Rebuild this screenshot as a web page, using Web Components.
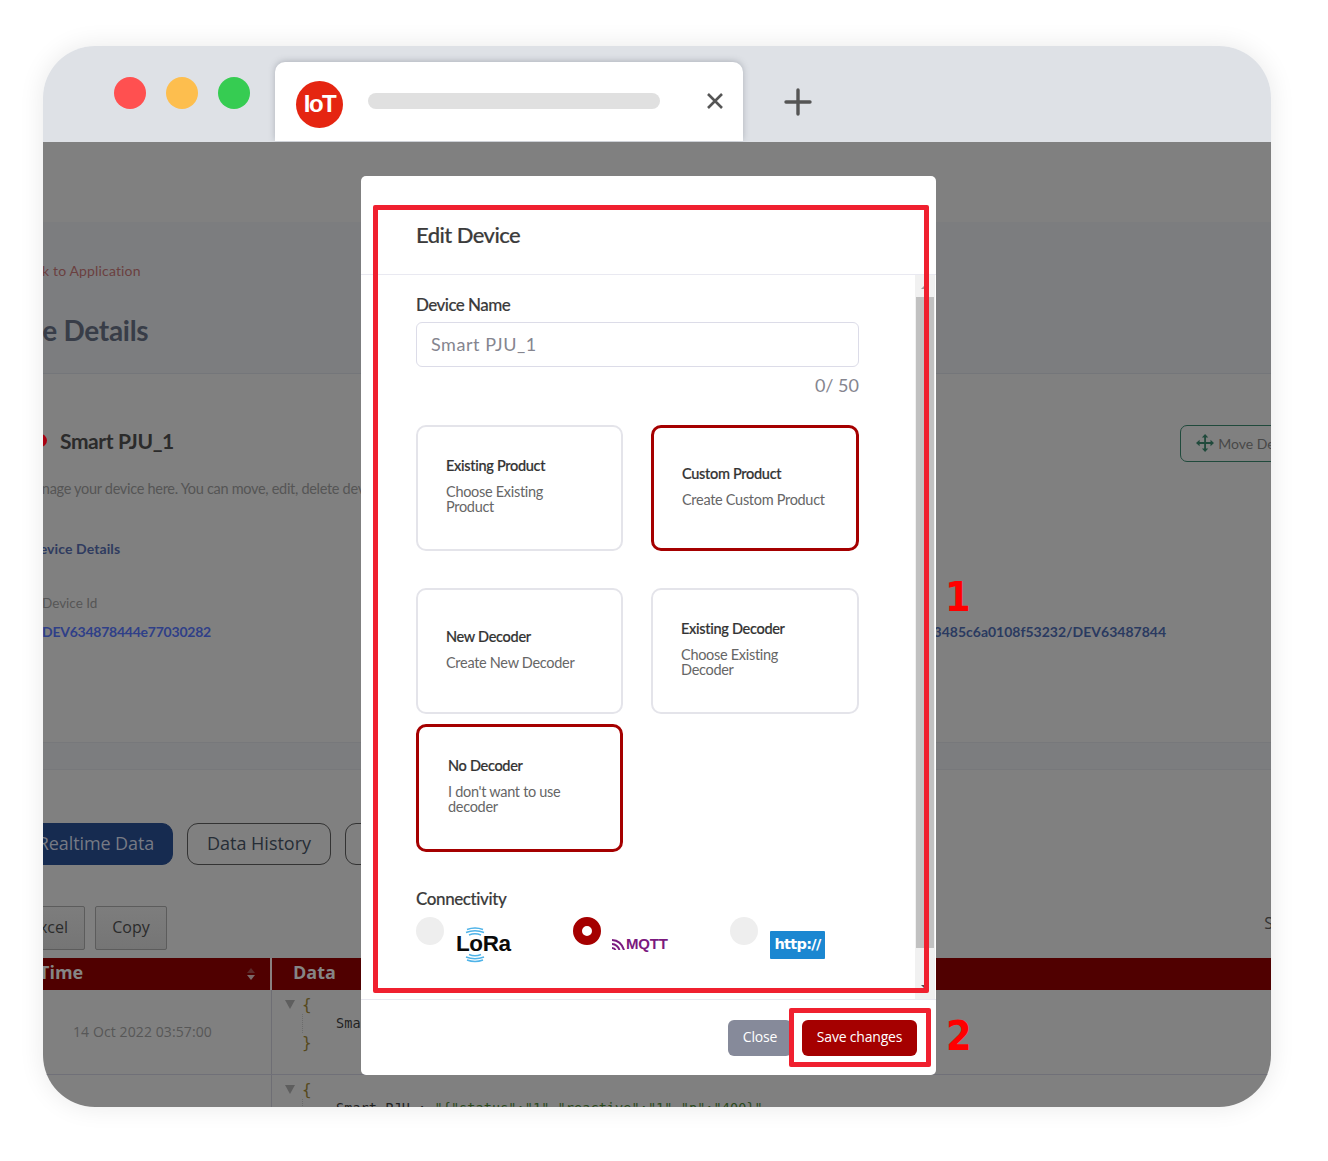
<!DOCTYPE html>
<html>
<head>
<meta charset="utf-8">
<title>Edit Device</title>
<style>
  html, body { background: #fff; }
  body { margin: 0; padding: 46px 0 54px 43px; font-family: Lato, sans-serif; }
</style>
</head>
<body>
<browser-window>
  <device-page></device-page>
  <edit-modal></edit-modal>
  <mark-box slot="marks" style="left:330px;top:159px;width:556px;height:788px"></mark-box>
  <mark-box slot="marks" style="left:746px;top:962px;width:142px;height:59px"></mark-box>
  <mark-digit slot="marks" style="left:902px;top:526px">1</mark-digit>
  <mark-digit slot="marks" style="left:903px;top:965px">2</mark-digit>
</browser-window>

<script>
class BrowserWindow extends HTMLElement {
  constructor() {
    super();
    this.attachShadow({ mode: "open" });
  }

  connectedCallback() {
    this.shadowRoot.innerHTML = `
      <style>
        :host {
          display: block;
          position: relative;
          width: 1228px;
          height: 1061px;
          border-radius: 52px;
          overflow: hidden;
          box-shadow: 0 0 26px rgba(0, 0, 0, 0.09);
        }
        .bar {
          display: flex;
          height: 96px;
          background: #dee1e6;
          box-sizing: border-box;
          padding: 16px 0 0 71px;
        }
        .dots { display: flex; gap: 20px; padding-top: 15px; width: 161px; }
        .dot { width: 32px; height: 32px; border-radius: 50%; }
        .tab {
          width: 468px;
          height: 79px;
          background: #fff;
          border-radius: 10px 10px 0 0;
          box-shadow: 0 -1px 6px rgba(90, 95, 110, 0.35);
          display: flex;
          align-items: center;
          box-sizing: border-box;
          padding-left: 21px;
          position: relative;
        }
        .logo {
          width: 47px;
          height: 47px;
          border-radius: 50%;
          background: #e52511;
          color: #fff;
          font: 700 24px/45px "Liberation Sans", sans-serif;
          letter-spacing: -1.5px;
          text-align: center;
          margin-top: 5px;
        }
        .pill { width: 292px; height: 16px; border-radius: 8px; background: #e0e0e0; margin: 0 0 2px 25px; }
        .close { margin: 0 0 2px 46px; }
        .plus { margin: 26px 0 0 41px; }
        .page { position: relative; height: 965px; overflow: hidden; }
      </style>
      <div class="bar">
        <div class="dots">
          <div class="dot" style="background:#ff5050"></div>
          <div class="dot" style="background:#fdbe4e"></div>
          <div class="dot" style="background:#36cc52"></div>
        </div>
        <div class="tab">
          <div class="logo">IoT</div>
          <div class="pill"></div>
          <svg class="close" width="18" height="18" viewBox="0 0 18 18"><path d="M2 2 16 16M16 2 2 16" stroke="#555" stroke-width="2.6" fill="none"/></svg>
        </div>
        <svg class="plus" width="28" height="28" viewBox="0 0 28 28"><path d="M14 2V26M2 14H26" stroke="#555" stroke-width="3.4" fill="none" stroke-linecap="round"/></svg>
      </div>
      <div class="page"><slot></slot></div>
      <slot name="marks"></slot>
    `;
  }
}

class DevicePage extends HTMLElement {
  constructor() {
    super();
    this.attachShadow({ mode: "open" });
  }

  connectedCallback() {
    this.shadowRoot.innerHTML = `
      <style>
        :host {
          display: block;
          height: 965px;
          background: #808080;
          font-family: Lato, sans-serif;
          overflow: hidden;
          white-space: nowrap;
        }
        .top { height: 80px; }
        .head { height: 152px; box-sizing: border-box; background: #7c7d7f; border-bottom: 1px solid #74767a; padding-top: 40px; }
        .back { font-size: 14px; line-height: 18px; color: #6b4040; margin-left: -24px; letter-spacing: 0.15px; }
        .title { font-size: 28px; font-weight: 700; line-height: 36px; color: #383d48; margin: 32px 0 0 -70px; letter-spacing: -0.3px; }
        .info { height: 368px; box-sizing: border-box; padding-top: 49px; position: relative; }
        .name-row { display: flex; align-items: center; height: 34px; justify-content: space-between; }
        .name { display: flex; align-items: center; gap: 13px; font-size: 21px; font-weight: 700; color: #2b2b2b; letter-spacing: -0.4px; margin-left: -9px; }
        .status { width: 13px; height: 13px; border-radius: 50%; background: #a80010; }
        .move {
          display: flex;
          align-items: center;
          gap: 4px;
          width: 120px;
          height: 37px;
          box-sizing: border-box;
          border: 1px solid #204a3c;
          border-radius: 7px;
          padding-left: 15px;
          margin-right: -29px;
          font-size: 14px;
          color: #484848;
          position: relative;
          top: 3px;
        }
        .desc { font-size: 14.5px; color: #555; margin: 21px 0 0 -21px; line-height: 22px; letter-spacing: -0.3px; }
        .sub { font-size: 14px; font-weight: 700; color: #2f3b5f; margin: 40px 0 0 -14px; line-height: 18px; letter-spacing: 0.1px; }
        .fields { display: flex; justify-content: space-between; margin-top: 36px; }
        .label { font-size: 13.5px; color: #565656; line-height: 18px; margin-left: -1px; }
        .value { font-size: 14px; font-weight: 700; line-height: 20px; margin-top: 10px; color: #2f3f88; margin-left: -1px; letter-spacing: -0.24px; }
        .url { color: #2a3a60; margin: 28px 105px 0 0; font-size: 14px; line-height: 20px; font-weight: 700; }
        .strip { height: 28px; box-sizing: border-box; background: #7c7d7f; border-top: 1px solid #77787b; border-bottom: 1px solid #77787b; }
        .tabs { display: flex; gap: 14px; padding-top: 53px; height: 42px; }
        .pillbtn {
          height: 42px;
          box-sizing: border-box;
          border: 1px solid #333;
          border-radius: 11px;
          font: 18px/38px "Open Sans", sans-serif;
          color: #262d36;
          text-align: center;
        }
        .pillbtn.on { background: #162b50; border-color: #162b50; color: #767a84; width: 152px; margin-left: -22px; padding-right: 2px; letter-spacing: -0.1px; }
        .tools { display: flex; gap: 10px; margin-top: 41px; height: 44px; position: relative; }
        .tool {
          box-sizing: border-box;
          border: 1px solid #5c5c5c;
          border-radius: 2px;
          background: linear-gradient(#7d7d7d, #757575);
          font: 16px/41px "Open Sans", sans-serif;
          color: #2b2b2b;
          text-align: center;
        }
        .search { position: absolute; right: -44px; top: 5px; font: 16px/24px "Open Sans", sans-serif; color: #333; }
        .thead { display: flex; height: 32px; margin-top: 8px; background: #500000; color: #858585; font: 700 18px/29px "Open Sans", sans-serif; }
        .th1 { width: 229px; flex: none; box-sizing: border-box; border-right: 2px solid #8a8080; display: flex; justify-content: space-between; padding-right: 15px; }
        .th1 span:first-child { margin-left: -4px; }
        .th2 { padding-left: 21px; }
        .sort { display: flex; flex-direction: column; justify-content: center; gap: 2px; }
        .sort i { width: 0; height: 0; border-left: 4px solid transparent; border-right: 4px solid transparent; }
        .row { display: flex; height: 85px; box-sizing: border-box; border-bottom: 1px solid #707078; }
        .c1 { width: 229px; flex: none; box-sizing: border-box; border-right: 1px solid #6e6e74; font: 14px/84px "Open Sans", sans-serif; color: #575757; padding-left: 30px; letter-spacing: 0.1px; }
        .json { padding: 5px 0 0 13px; font: 13.5px/19px "DejaVu Sans Mono", monospace; color: #222; letter-spacing: 0.08px; }
        .open { display: flex; align-items: center; gap: 7px; }
        .open i { width: 0; height: 0; border-left: 5px solid transparent; border-right: 5px solid transparent; border-top: 9px solid #5e5e5e; }
        .brace { font-size: 16px; color: #56491c; }
        .inner { margin-left: 17px; border-left: 1px dotted #6c6c6c; padding-left: 33px; }
        .close { padding-left: 17px; }
        .green { color: #2a4a1c; }
      </style>
      <div class="top"></div>
      <div class="head">
        <div class="back">Back to Application</div>
        <div class="title">Device Details</div>
      </div>
      <div class="info">
        <div class="name-row">
          <div class="name"><span class="status"></span>Smart PJU_1</div>
          <div class="move">
            <svg width="20" height="20" viewBox="0 0 20 20" fill="#204a3c"><path d="M10 3V17M3 10H17" stroke="#204a3c" stroke-width="2"/><path d="M10 0 13.5 4H6.500ZM10 20 6.500 16H13.500ZM0 10 4 6.500V13.500ZM20 10 16 13.500V6.500Z"/></svg>
            <span>Move Device</span>
          </div>
        </div>
        <div class="desc">Manage your device here. You can move, edit, delete device</div>
        <div class="sub">Device Details</div>
        <div class="fields">
          <div>
            <div class="label">Device Id</div>
            <div class="value">DEV634878444e77030282</div>
          </div>
          <div class="url">63485c6a0108f53232/DEV63487844</div>
        </div>
      </div>
      <div class="strip"></div>
      <div class="tabs">
        <div class="pillbtn on">Realtime Data</div>
        <div class="pillbtn" style="width:144px">Data History</div>
        <div class="pillbtn" style="width:120px">Logs</div>
      </div>
      <div class="tools">
        <div class="tool" style="width:72px;margin-left:-30px">Excel</div>
        <div class="tool" style="width:72px">Copy</div>
        <div class="search">Search</div>
      </div>
      <div class="thead">
        <div class="th1"><span>Time</span><span class="sort"><i style="border-bottom:5px solid #5c2a2a"></i><i style="border-top:5px solid #7a6a6a"></i></span></div>
        <div class="th2">Data</div>
      </div>
      <div class="row">
        <div class="c1">14 Oct 2022 03:57:00</div>
        <div class="json">
          <div class="open"><i></i><span class="brace">{</span></div>
          <div class="inner">Smart PJU</div>
          <div class="close brace">}</div>
        </div>
      </div>
      <div class="row">
        <div class="c1"></div>
        <div class="json">
          <div class="open"><i></i><span class="brace">{</span></div>
          <div class="inner">Smart PJU : <span class="green">"{"status":"1","reactive":"1","p":"400}"</span></div>
        </div>
      </div>
    `;
  }
}

class EditModal extends HTMLElement {
  constructor() {
    super();
    this.attachShadow({ mode: "open" });
  }

  connectedCallback() {
    this.shadowRoot.innerHTML = `
      <style>
        :host {
          display: flex;
          flex-direction: column;
          position: absolute;
          left: 318px;
          top: 34px;
          width: 575px;
          height: 899px;
          background: #fff;
          border-radius: 5px;
          color: #3b3b3b;
          font-family: Lato, sans-serif;
          overflow: hidden;
        }
        .head { height: 99px; flex: none; box-sizing: border-box; border-bottom: 1px solid #e9e9f1; padding: 44px 0 0 55px; }
        h2 { margin: 0; font-size: 22px; line-height: 30px; font-weight: 500; letter-spacing: -0.55px; -webkit-text-stroke: 0.2px #3b3b3b; }
        .body { flex: 1; display: flex; min-height: 0; }
        .content { flex: 1; box-sizing: border-box; padding: 21px 0 0 55px; }
        .label { font-size: 17px; line-height: 18px; letter-spacing: -0.55px; font-weight: 500; -webkit-text-stroke: 0.15px #3b3b3b; }
        .input {
          width: 443px;
          height: 45px;
          box-sizing: border-box;
          margin-top: 8px;
          border: 1px solid #dcdce8;
          border-radius: 6px;
          padding-left: 14px;
          font: 18px/43px Lato, sans-serif;
          color: #85858f;
          letter-spacing: 0.55px;
        }
        .count { width: 443px; text-align: right; margin-top: 8px; font-size: 18px; line-height: 21px; color: #85858f; }
        .row { display: flex; gap: 28px; }
        .row option-card:first-child { width: 207px; }
        .row option-card:last-child:not(:first-child) { width: 208px; }
        .row.first { margin-top: 29px; }
        .row.second { margin-top: 37px; }
        .row.third { margin-top: 10px; }
        .label.conn { margin-top: 38px; letter-spacing: -0.4px; }
        .radios { display: flex; margin-top: 9px; }
        .bar { width: 20px; margin-right: 1px; flex: none; background: #f1f1f1; display: flex; flex-direction: column; align-items: center; }
        .up, .down { width: 0; height: 0; border-left: 4px solid transparent; border-right: 4px solid transparent; }
        .up { border-bottom: 4px solid #a0a0a0; margin-top: 10px; }
        .thumb { width: 18px; height: 651px; margin-top: 8px; background: #c1c1c1; }
        .down { border-top: 4px solid #505050; margin-top: auto; margin-bottom: 10px; }
        .foot { height: 76px; flex: none; box-sizing: border-box; border-top: 1px solid #e9e9f1; display: flex; justify-content: flex-end; align-items: center; gap: 10px; padding-right: 19px; }
        .btn { height: 36px; border-radius: 6px; color: #fff; font: 14px/34px "Open Sans", sans-serif; text-align: center; letter-spacing: -0.2px; }
      </style>
      <div class="head"><h2>Edit Device</h2></div>
      <div class="body">
        <div class="content">
          <div class="label">Device Name</div>
          <div class="input">Smart PJU_1</div>
          <div class="count">0/ 50</div>
          <div class="row first">
            <option-card title="Existing Product" pad="30" h="126">Choose Existing<br>Product</option-card>
            <option-card title="Custom Product" pad="31" h="126" selected>Create Custom Product</option-card>
          </div>
          <div class="row second">
            <option-card title="New Decoder" pad="30" h="126">Create New Decoder</option-card>
            <option-card title="Existing Decoder" pad="30" h="126">Choose Existing<br>Decoder</option-card>
          </div>
          <div class="row third">
            <option-card title="No Decoder" pad="32" h="128" selected>I don't want to use<br>decoder</option-card>
          </div>
          <div class="label conn">Connectivity</div>
          <div class="radios">
            <radio-option>
              <span style="display:block;margin:10px 0 0 12px">
                <lora-logo></lora-logo>
              </span>
            </radio-option>
            <radio-option selected>
              <span style="display:block;margin:19px 0 0 11px">
                <mqtt-logo></mqtt-logo>
              </span>
            </radio-option>
            <radio-option>
              <span style="display:block;margin:14px 0 0 12px">
                <http-logo></http-logo>
              </span>
            </radio-option>
          </div>
        </div>
        <div class="bar"><div class="up"></div><div class="thumb"></div><div class="down"></div></div>
      </div>
      <div class="foot">
        <div class="btn" style="width:64px;background:#868a9a">Close</div>
        <div class="btn" style="width:115px;background:#a50000">Save changes</div>
      </div>
    `;
  }
}

class OptionCard extends HTMLElement {
  constructor() {
    super();
    this.attachShadow({ mode: "open" });
  }

  connectedCallback() {
    const selected = this.hasAttribute("selected");
    this.shadowRoot.innerHTML = `
      <style>
        :host {
          display: flex;
          flex-direction: column;
          justify-content: center;
          box-sizing: border-box;
          width: 207px;
          height: ${this.getAttribute("h")}px;
          padding-left: ${Number(this.getAttribute("pad")) - (selected ? 3 : 2)}px;
          padding-bottom: 5px;
          border: ${selected ? "3px solid #a50000" : "2px solid #e4e4ea"};
          border-radius: 10px;
          font-family: Lato, sans-serif;
        }
        .t { font-size: 14.5px; line-height: 18px; color: #333; letter-spacing: -0.3px; font-weight: 500; -webkit-text-stroke: 0.2px #333; }
        .d { font-size: 14.5px; line-height: 15px; color: #666; margin-top: 9px; letter-spacing: -0.3px; }
      </style>
      <div class="t">${this.getAttribute("title")}</div>
      <div class="d"><slot></slot></div>
    `;
  }
}

class RadioOption extends HTMLElement {
  constructor() {
    super();
    this.attachShadow({ mode: "open" });
  }

  connectedCallback() {
    const selected = this.hasAttribute("selected");
    this.shadowRoot.innerHTML = `
      <style>
        :host { display: flex; width: 157px; height: 50px; }
        .dot {
          width: 28px;
          height: 28px;
          flex: none;
          box-sizing: border-box;
          border-radius: 50%;
          background: ${selected ? "#fff" : "#eeeeee"};
          border: ${selected ? "9px solid #a50000" : "none"};
        }
      </style>
      <div class="dot"></div>
      <slot></slot>
    `;
  }
}

class LoraLogo extends HTMLElement {
  constructor() {
    super();
    this.attachShadow({ mode: "open" });
  }

  connectedCallback() {
    this.shadowRoot.innerHTML = `
      <style>
        :host { display: block; position: relative; width: 56px; height: 36px; }
        svg { position: absolute; left: 0; top: 0; }
        span { position: absolute; left: 0; top: 4px; font: 700 22.5px/26px "Liberation Sans", sans-serif; color: #0a0a0a; letter-spacing: -0.4px; }
      </style>
      <svg width="56" height="36" viewBox="0 0 56 36" fill="none" stroke="#4fb3e8" stroke-width="1.4">
        <path d="M11 2.500Q19-.5 27 2.500M10 5.500Q19 2 28 5.500M13 8Q19 5.500 25 8"/>
        <path d="M13 27.500Q19 30 25 27.500M10 30Q19 33.500 28 30M11 33Q19 36 27 33"/>
      </svg>
      <span>LoRa</span>
    `;
  }
}

class MqttLogo extends HTMLElement {
  constructor() {
    super();
    this.attachShadow({ mode: "open" });
  }

  connectedCallback() {
    this.shadowRoot.innerHTML = `
      <style>
        :host { display: flex; align-items: center; gap: 1px; color: #7b1a7e; font: 700 15px/16px "Liberation Sans", sans-serif; width: 60px; letter-spacing: -0.2px; }
      </style>
      <svg width="13" height="11" viewBox="0 0 13 11" fill="none" stroke="#7b1a7e" stroke-width="2">
        <path d="M0 1Q9 1.500 12 11M0 5Q5.500 5.500 7.500 11M0 9Q2.500 9 3.500 11"/>
      </svg>
      <span>MQTT</span>
    `;
  }
}

class HttpLogo extends HTMLElement {
  constructor() {
    super();
    this.attachShadow({ mode: "open" });
  }

  connectedCallback() {
    this.shadowRoot.innerHTML = `
      <style>
        :host { display: block; width: 55px; height: 28px; background: #1b87d1; border-radius: 1px; color: #fff; font: 700 14.5px/26px "DejaVu Sans", sans-serif; text-align: center; letter-spacing: -0.7px; }
      </style>
      http://
    `;
  }
}

class MarkBox extends HTMLElement {
  constructor() {
    super();
    this.attachShadow({ mode: "open" });
  }

  connectedCallback() {
    this.shadowRoot.innerHTML = `
      <style>
        :host { display: block; position: absolute; box-sizing: border-box; border: 5px solid #f0202f; border-radius: 2px; }
      </style>
    `;
  }
}

class MarkDigit extends HTMLElement {
  constructor() {
    super();
    this.attachShadow({ mode: "open" });
  }

  connectedCallback() {
    this.shadowRoot.innerHTML = `
      <style>
        :host { display: block; position: absolute; font: 700 41px/50px "DejaVu Sans Condensed", "DejaVu Sans", sans-serif; color: #ff0000; }
      </style>
      <slot></slot>
    `;
  }
}

customElements.define("browser-window", BrowserWindow);
customElements.define("device-page", DevicePage);
customElements.define("edit-modal", EditModal);
customElements.define("option-card", OptionCard);
customElements.define("radio-option", RadioOption);
customElements.define("lora-logo", LoraLogo);
customElements.define("mqtt-logo", MqttLogo);
customElements.define("http-logo", HttpLogo);
customElements.define("mark-box", MarkBox);
customElements.define("mark-digit", MarkDigit);
</script>
</body>
</html>
